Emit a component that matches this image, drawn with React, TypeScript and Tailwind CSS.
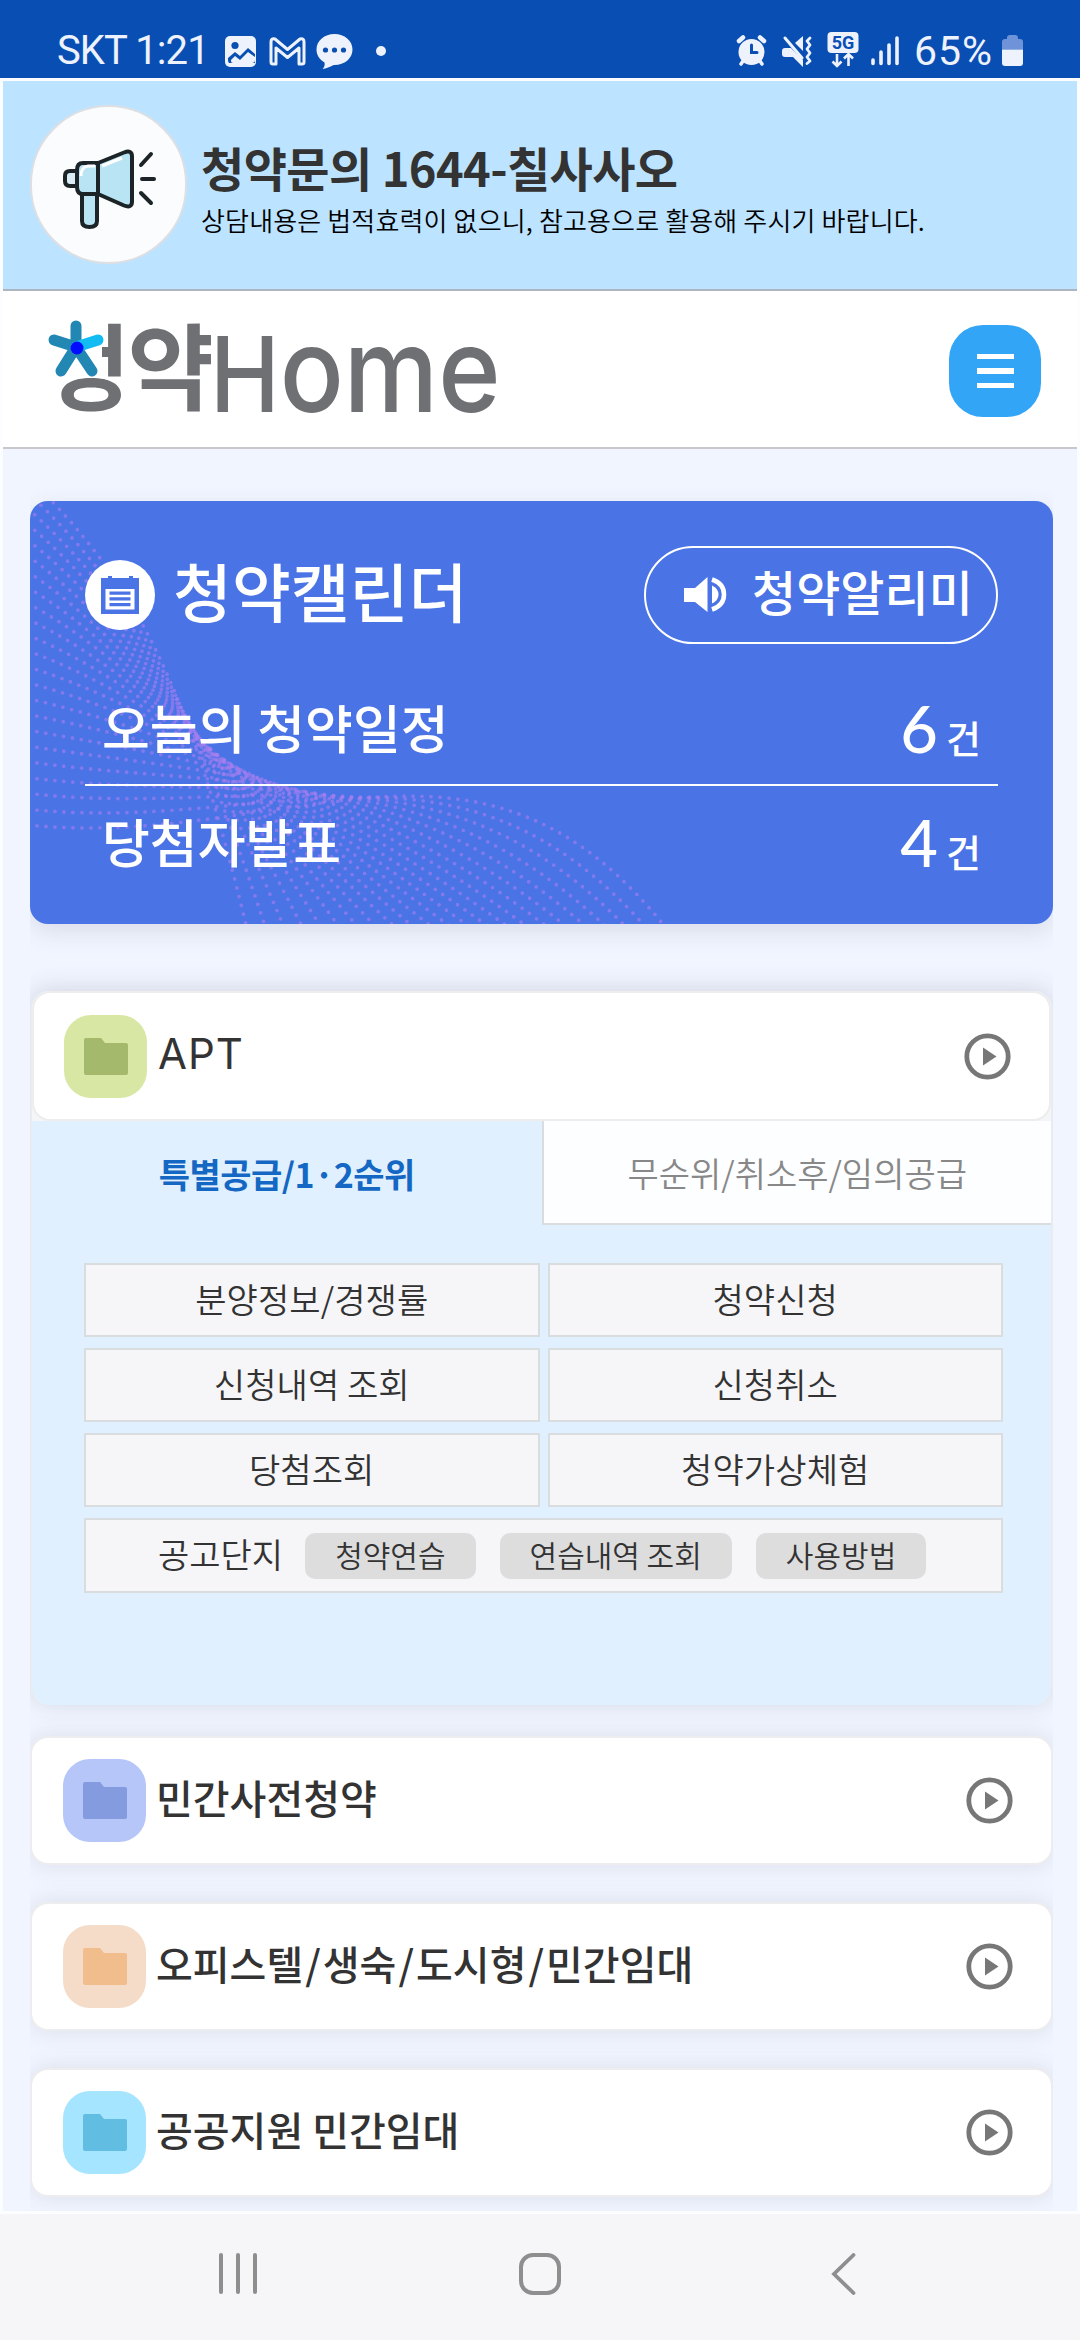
import type { ReactNode } from "react";

type CategoryCardProps = {
  title: string;
  tileClass: string;
  folderColor: string;
};

const CATEGORIES: CategoryCardProps[] = [
  { title: "민간사전청약", tileClass: "bg-[#b6c6f8]", folderColor: "#859bdf" },
  {
    title: "오피스텔/생숙/도시형/민간임대",
    tileClass: "bg-[#f4dcc9]",
    folderColor: "#f2bd8d",
  },
  { title: "공공지원 민간임대", tileClass: "bg-[#a6e5ff]", folderColor: "#62bde2" },
];

const APT_MENUS = [
  "분양정보/경쟁률",
  "청약신청",
  "신청내역 조회",
  "신청취소",
  "당첨조회",
  "청약가상체험",
];

const PRACTICE_MENUS = ["청약연습", "연습내역 조회", "사용방법"];

const WAVE_COUNT = 23;

// one dotted line of the ribbon, t runs from the steepest line (0) to the flattest (1)
const wavePath = (t: number) => {
  const bow = 4 * t * (1 - t);
  const y0 = -24 + t * 348;
  const x1 = 110 + t * 150 - bow * 60;
  const y1 = 85 + t * 265 - bow * 22;
  const x2 = 160 + t * 290 - bow * 45;
  const y2 = 190 - t * 2 + bow * 118;
  const x3 = 218 + t * 422;
  return `M-2 ${y0}C${x1} ${y1} ${x2} ${y2} ${x3} 432`;
};

const WaveDots = () => (
  <svg
    className="absolute inset-0"
    width="1023"
    height="423"
    fill="none"
    stroke="#a97ff0"
    strokeOpacity="0.6"
    strokeWidth="3.8"
    strokeLinecap="round"
    strokeDasharray="0 9"
  >
    {Array.from({ length: WAVE_COUNT }, (_, i) => (
      <path key={i} d={wavePath(i / (WAVE_COUNT - 1))} />
    ))}
  </svg>
);

const StatusBar = () => (
  <header className="flex h-[78px] shrink-0 items-start bg-[#094fb3] pl-[57px] pr-[57px] pt-[31px] font-['Roboto'] text-[40px] leading-[40px] text-[#eef2fd]">
    <span className="w-[168px] whitespace-nowrap tracking-[-0.9px]">SKT 1:21</span>
    <svg className="-mt-px" width="170" height="42" viewBox="225 30 170 42">
      <rect x="225" y="36" width="31" height="31" rx="5" fill="#eef2fd" />
      <circle cx="235" cy="45.5" r="3.6" fill="#094fb3" />
      <path d="M228 58l7-6 5 4 8-8 7 6v3l-7-5-8 8-5-4-4 4v1q0 2 2 2h19q3 0 3-3v3H229q-1-1-1-3z" fill="#094fb3" />
      <path
        d="M271 62V42q0-4 4-3l12.500 10.500L300 39q4-1 4 3v20q0 2-2 2h-3V48l-11.500 9.500L276 48v16h-3q-2 0-2-2z"
        fill="none"
        stroke="#eef2fd"
        strokeWidth="3"
        strokeLinejoin="round"
      />
      <path
        d="M334.500 34c10 0 18 6.500 18 15.500S344.500 65 334.500 65c-2 0-4 2.500-12 4 2-2 2.500-4 2-6.500-5-3-8-7.500-8-13 0-9 8-15.500 18-15.500z"
        fill="#eef2fd"
      />
      <circle cx="325.500" cy="50" r="2.600" fill="#094fb3" />
      <circle cx="334.500" cy="50" r="2.600" fill="#094fb3" />
      <circle cx="343.500" cy="50" r="2.600" fill="#094fb3" />
      <circle cx="381" cy="51" r="5" fill="#eef2fd" />
    </svg>
    <svg className="-mt-px ml-auto" width="166" height="42" viewBox="736 30 166 42">
      <g stroke="#eef2fd" strokeLinecap="round" fill="none">
        <circle cx="751.500" cy="52" r="13" fill="#eef2fd" stroke="none" />
        <path d="M739 41l4-3.500M764 41l-4-3.500" strokeWidth="4.500" />
        <path d="M743 61l-2 3M760 61l2 3" strokeWidth="3.500" />
        <path d="M751.500 45v7.500h5.500" stroke="#094fb3" strokeWidth="3" />
        <path d="M782 51q0-3 3-3h6l12 12v7l-10-10h-8q-3 0-3-3z" fill="#eef2fd" stroke="none" />
        <path d="M795 43l8-7v15z" fill="#eef2fd" stroke="none" />
        <path d="M785 38l17 20" strokeWidth="3" />
        <path d="M810 38l-3 3 3 4-3 4 3 4-3 4 3 4-3 2.500" strokeWidth="2.800" strokeLinejoin="round" />
      </g>
      <rect x="827.500" y="32" width="31" height="21" rx="4" fill="#eef2fd" />
      <text x="843" y="49" textAnchor="middle" fontSize="18" fontWeight="700" fill="#094fb3">
        5G
      </text>
      <path
        d="M837 54v12M832.500 61.500l4.500 4.500 4.500-4.500M848.500 66V54M844 58.500l4.500-4.500 4.500 4.500"
        fill="none"
        stroke="#eef2fd"
        strokeWidth="2.600"
      />
      <path
        d="M873 60v3.500M881 52v11.500M889 45v18.500M897 38v25.500"
        stroke="#eef2fd"
        strokeWidth="3.600"
        strokeLinecap="round"
      />
    </svg>
    <span className="ml-[12px] w-[88px] whitespace-nowrap text-[41px] tracking-[1px]">65%</span>
    <svg className="-mt-px" width="21" height="42" viewBox="1002 30 21 42">
      <path d="M1007 38q0-3 3-3h5q3 0 3 3v1h2q3 0 3 3v7.500h-21V42q0-3 3-3h2z" fill="#6f93d8" />
      <path d="M1002 49.500h21V63q0 3-3 3h-15q-3 0-3-3z" fill="#eef2fd" />
    </svg>
  </header>
);

const ContactBanner = () => (
  <section className="flex h-[210px] shrink-0 items-start border-b-2 border-[#adb5bf] bg-[#bce3ff] pl-[27px]">
    <div className="mt-[24px] h-[159px] w-[157px] rounded-full border-2 border-[#dedfe3] bg-[#fbfcfd]">
      <svg width="153" height="155" viewBox="32 107 153 155">
        <g stroke="#1d2427" strokeWidth="4" strokeLinejoin="round" strokeLinecap="round">
          <path d="M82 194v27q0 6 7.500 6t7.500-6v-27z" fill="#b8e4f4" />
          <path d="M77 171h-7q-5 0-5 5v5q0 5 5 5h7z" fill="#d9edf5" />
          <path d="M98 163H83q-6 0-6 7v17q0 7 6 7h15z" fill="#b8e4f4" />
          <path d="M98 163l26-10.500q8-3 8 4v45q0 7-8 4L98 194z" fill="#b8e4f4" />
          <path d="M141 165l10-11M142 179h12M141 193l10 10" fill="none" />
        </g>
        <path d="M81 176q0-9 7-10h7M102 166l20-8" stroke="#fff" strokeWidth="3" fill="none" />
      </svg>
    </div>
    <div className="ml-[14px] mt-[51px] whitespace-nowrap">
      <h2 className="text-[47px] font-bold leading-[70px] tracking-[-0.6px] text-[#333]">
        청약문의 1644-칠사사오
      </h2>
      <p className="text-[26px] font-[350] leading-[36px] tracking-[0.15px] text-black">
        상담내용은 법적효력이 없으니, 참고용으로 활용해 주시기 바랍니다.
      </p>
    </div>
  </section>
);

const Logo = () => (
  <svg
    className="mt-[4px] overflow-visible"
    width="490"
    height="146"
    viewBox="48 295 490 146"
    role="img"
  >
    <g fill="#6f7074">
      <text
        x="44"
        y="403"
        fontFamily="'Noto Sans CJK KR', sans-serif"
        fontSize="94"
        fontWeight="700"
        letterSpacing="-3"
      >
        청약
      </text>
      <text
        transform="translate(210 412) scale(.9 1)"
        fontFamily="Inter, sans-serif"
        fontWeight="500"
        fontSize="104"
      >
        H<tspan fontSize="118">ome</tspan>
      </text>
    </g>
    <path d="M44 310h58v67H44z" fill="#fff" />
    <g strokeWidth="11" strokeLinecap="round" stroke="#2387b3">
      <path d="M76 347V326M76 347l-22-7M76 347l-15 24M76 347l16 24" />
      <path d="M76 347l22-7" stroke="#12bbf2" />
    </g>
    <circle cx="77" cy="348" r="6.500" fill="#000dff" />
  </svg>
);

const SiteHeader = () => (
  <div className="flex h-[158px] shrink-0 items-start justify-between border-b-2 border-[#c8c8cc] bg-white pl-[45px] pr-[36px]">
    <Logo />
    <button
      type="button"
      aria-label="전체메뉴"
      className="mt-[34px] flex h-[92px] w-[92px] flex-col items-center justify-center gap-[9px] rounded-[34px] bg-[#33a5f7]"
    >
      <span className="h-[5.5px] w-[37px] bg-white" />
      <span className="h-[5.5px] w-[37px] bg-white" />
      <span className="h-[5.5px] w-[37px] bg-white" />
    </button>
  </div>
);

const CountRow = ({ label, count }: { label: string; count: number }) => (
  <div className="flex items-center justify-between whitespace-nowrap pl-[17px] pr-[17px]">
    <span className="-mt-[3px] text-[52px] font-medium leading-[76px]">{label}</span>
    <span className="flex items-baseline pt-[8px] leading-[68px]">
      <span className="font-['Lato'] text-[65px] font-medium leading-[60px]">{count}</span>
      <span className="ml-[8px] text-[38px] font-medium leading-[60px]">건</span>
    </span>
  </div>
);

const CalendarCard = () => (
  <section className="relative h-[423px] rounded-[18px] bg-[#4a73e6] text-white shadow-[0_8px_24px_rgba(60,70,90,0.13)]">
    <div className="absolute inset-0 overflow-hidden rounded-[18px]">
      <WaveDots />
    </div>
    <div className="relative px-[55px] pt-[45px]">
      <div className="flex h-[98px] items-center justify-between">
        <div className="flex items-center">
          <svg width="70" height="70" viewBox="0 0 70 70">
            <circle cx="35" cy="35" r="35" fill="#fff" />
            <path d="M16 18h7v-2h4v2h17v-2h4v2h6v36H16z" fill="#4a73e6" />
            <path d="M20.500 29h29v20.500h-29z" fill="#fff" />
            <path d="M24.500 31.500h21v3.200h-21zM24.500 37.200h21v3.200h-21zM24.500 43h21v3.200h-21z" fill="#4a73e6" />
          </svg>
          <h2 className="-mt-[13px] ml-[18px] whitespace-nowrap text-[64px] font-medium leading-[88px]">
            청약캘린더
          </h2>
        </div>
        <button
          type="button"
          className="flex h-[98px] w-[354px] items-center rounded-full border-2 border-white pl-[38px]"
        >
          <svg width="44" height="36" viewBox="0 0 44 36" fill="#fff">
            <path d="M0 11h11L23.500 0v35L11 25H0z" />
            <path d="M28 8.500q6.500 3 6.500 9t-6.500 9z" />
            <path d="M28 2.500q12 4 12 15t-12 15" fill="none" stroke="#fff" strokeWidth="4.500" />
          </svg>
          <span className="-mt-[11px] ml-[24px] whitespace-nowrap text-[48px] font-medium leading-[70px]">
            청약알리미
          </span>
        </button>
      </div>
      <div className="mt-[46px]">
        <CountRow label="오늘의 청약일정" count={6} />
      </div>
      <div className="mt-[17px] border-t-[2px] border-white pt-[18px]">
        <CountRow label="당첨자발표" count={4} />
      </div>
    </div>
  </section>
);

const FolderTile = ({ tileClass, color }: { tileClass: string; color: string }) => (
  <span className={`flex h-[83px] w-[83px] items-center justify-center rounded-[27px] ${tileClass}`}>
    <svg width="44" height="37" viewBox="0 0 44 37" fill={color}>
      <path d="M2 0h15l4 5h21q2 0 2 2v28q0 2-2 2H2q-2 0-2-2V2q0-2 2-2z" />
    </svg>
  </span>
);

const PlayCircle = () => (
  <svg width="47" height="47" viewBox="0 0 47 47">
    <circle cx="23.500" cy="23.500" r="20.700" fill="none" stroke="#777" strokeWidth="4.800" />
    <path d="M19 14.500l13.500 9-13.500 9z" fill="#777" />
  </svg>
);

const AptMenuBox = ({ children }: { children: ReactNode }) => (
  <button
    type="button"
    className="h-[74px] border-2 border-[#dadde0] bg-[#f6f6f9] pb-[4px] text-[34px] font-[350] tracking-[0.1px] text-[#333]"
  >
    {children}
  </button>
);

const AptSection = () => (
  <section className="h-[714px] rounded-[18px] border-x-2 border-[#e9ebef] bg-[#e0f0ff] shadow-[0_-2px_24px_rgba(40,55,80,0.16)]">
    <div className="rounded-t-[18px] bg-[#f4f5f8]">
      <div className="flex h-[130px] items-center justify-between rounded-[18px] border-2 border-[#ededee] bg-white pl-[30px] pr-[38px]">
        <div className="flex items-center">
          <FolderTile tileClass="bg-[#d8e8a4]" color="#a4b96b" />
          <h3 className="-mt-[4px] ml-[11px] font-['Inter'] text-[42px] leading-[60px] tracking-[1px] text-[#333]">
            APT
          </h3>
        </div>
        <PlayCircle />
      </div>
    </div>
    <div className="grid h-[104px] grid-cols-2 whitespace-nowrap text-[34px]">
      <button type="button" className="font-bold tracking-[-0.5px] text-[#1467c2]">
        특별공급/1·2순위
      </button>
      <button
        type="button"
        className="border-b-2 border-l-2 border-[#dadde0] bg-[#fdfeff] font-[350] text-[#888]"
      >
        무순위/취소후/임의공급
      </button>
    </div>
    <div className="mt-[38px] grid grid-cols-2 gap-x-[8px] gap-y-[11px] pl-[52px] pr-[48px]">
      {APT_MENUS.map((menu) => (
        <AptMenuBox key={menu}>{menu}</AptMenuBox>
      ))}
      <div className="col-span-2 flex h-[75px] items-center whitespace-nowrap border-2 border-[#dadde0] bg-[#f6f6f9] pl-[72px] font-[350] text-[#333]">
        <span className="-mt-[3px] mr-[22px] text-[34px] leading-[50px]">공고단지</span>
        <div className="flex gap-[24px]">
          {PRACTICE_MENUS.map((menu) => (
            <button
              key={menu}
              type="button"
              className="h-[46px] rounded-[10px] bg-[#ddd] px-[30px] pb-[3px] text-[30px] leading-[42px]"
            >
              {menu}
            </button>
          ))}
        </div>
      </div>
    </div>
  </section>
);

const CategoryCard = ({ title, tileClass, folderColor }: CategoryCardProps) => (
  <section className="flex h-[129px] items-center justify-between rounded-[18px] border-2 border-[#ededef] bg-white pl-[31px] pr-[38px] shadow-[0_0_24px_rgba(60,70,90,0.13)]">
    <div className="flex items-center">
      <FolderTile tileClass={tileClass} color={folderColor} />
      <h3 className="-mt-[8px] ml-[10px] whitespace-nowrap text-[40px] font-medium leading-[60px] text-[#333]">
        {title.split("/").map((part, i) => (
          <span key={part}>
            {i > 0 && <span className="px-[2px]">/</span>}
            {part}
          </span>
        ))}
      </h3>
    </div>
    <PlayCircle />
  </section>
);

const NavigationBar = () => (
  <nav className="flex h-[126px] shrink-0 items-start bg-[#f6f6f9] pt-[39px] text-[#8e8e8e]">
    <div className="ml-[219px] mr-[262px] flex gap-[13px]">
      <span className="h-[41px] w-[4px] rounded-full bg-current" />
      <span className="h-[41px] w-[4px] rounded-full bg-current" />
      <span className="h-[41px] w-[4px] rounded-full bg-current" />
    </div>
    <span className="h-[42px] w-[42px] rounded-[14px] border-4 border-current" />
    <svg
      className="ml-[270px]"
      width="26"
      height="42"
      viewBox="0 0 26 42"
      fill="none"
      stroke="currentColor"
      strokeWidth="3.800"
      strokeLinecap="round"
    >
      <path d="M22.500 2L3 21l19.500 19" />
    </svg>
  </nav>
);

export default function App() {
  return (
    <div className="flex h-[2340px] w-[1080px] flex-col overflow-hidden bg-[#fcfdff] font-['Noto_Sans_CJK_KR',sans-serif]">
      <StatusBar />
      <main className="mx-[3px] mb-[3px] mt-[3px] flex h-[2130px] shrink-0 flex-col bg-[#f1f5ff]">
        <ContactBanner />
        <SiteHeader />
        <div className="ml-[27px] flex min-h-0 w-[1023px] flex-1 flex-col overflow-hidden pt-[52px]">
          <CalendarCard />
          <div className="mt-[67px]">
            <AptSection />
          </div>
          <div className="mt-[31px] flex flex-col gap-[37px]">
            {CATEGORIES.map((category) => (
              <CategoryCard key={category.title} {...category} />
            ))}
          </div>
        </div>
      </main>
      <NavigationBar />
    </div>
  );
}
